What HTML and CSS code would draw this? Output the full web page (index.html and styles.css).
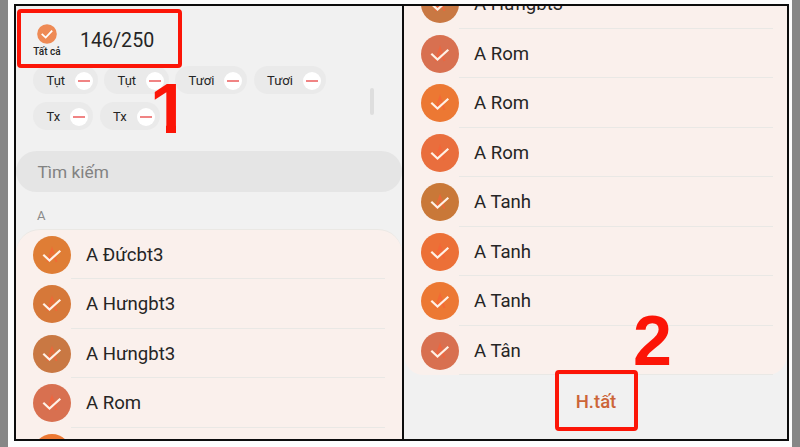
FILE: index.html
```html
<!DOCTYPE html>
<html lang="vi">
<head>
	<meta charset="UTF-8">
	<title>Danh bạ</title>
	<link rel="stylesheet" href="styles.css">
</head>
<body>
	<svg class="defs" width="0" height="0">
		<symbol id="check" viewBox="0 0 38 38">
			<path class="letter" d="M14.5 26 L19 13.5 L23.5 26 M16 22 H22"/>
			<path class="tick" d="M10.3 18.8 L16.5 24.6 L27.3 14.7"/>
		</symbol>
	</svg>
	<div class="page">
		<div class="frame">
			<div class="panel left">
				<div class="top">
					<div class="all">
						<svg width="20" height="20" viewBox="0 0 20 20">
							<circle cx="10" cy="10" r="9.8" fill="#ee8a55"/>
							<path d="M4.7 9.8 L8.7 13.6 L15.2 6.7" fill="none" stroke="#fff" stroke-width="1.8"/>
						</svg>
						<span>Tất cả</span>
					</div>
					<div class="count">146/250</div>
				</div>
				<div class="chips">
					<div class="chip c1">Tụt<i></i></div>
					<div class="chip c1">Tụt<i></i></div>
					<div class="chip c2">Tươi<i></i></div>
					<div class="chip c2">Tươi<i></i></div>
					<div class="chip c3">Tx<i></i></div>
					<div class="chip c3">Tx<i></i></div>
				</div>
				<div class="search">Tìm kiếm</div>
				<div class="group">A</div>
				<div class="list">
					<div class="row"><svg class="avatar orange"><use href="#check"/></svg><span>A Đứcbt3</span></div>
					<div class="row"><svg class="avatar amber"><use href="#check"/></svg><span>A Hưngbt3</span></div>
					<div class="row"><svg class="avatar brown"><use href="#check"/></svg><span>A Hưngbt3</span></div>
					<div class="row"><svg class="avatar red"><use href="#check"/></svg><span>A Rom</span></div>
					<div class="row"><svg class="avatar bright"><use href="#check"/></svg></div>
				</div>
				<div class="scroll"></div>
			</div>
			<div class="panel right">
				<div class="list">
					<div class="row"><svg class="avatar brown"><use href="#check"/></svg><span>A Hưngbt3</span></div>
					<div class="row"><svg class="avatar red"><use href="#check"/></svg><span>A Rom</span></div>
					<div class="row"><svg class="avatar bright"><use href="#check"/></svg><span>A Rom</span></div>
					<div class="row"><svg class="avatar coral"><use href="#check"/></svg><span>A Rom</span></div>
					<div class="row"><svg class="avatar ochre"><use href="#check"/></svg><span>A Tanh</span></div>
					<div class="row"><svg class="avatar vivid"><use href="#check"/></svg><span>A Tanh</span></div>
					<div class="row"><svg class="avatar bright"><use href="#check"/></svg><span>A Tanh</span></div>
					<div class="row"><svg class="avatar red"><use href="#check"/></svg><span>A Tân</span></div>
				</div>
				<div class="done">H.tất</div>
			</div>
		</div>
		<div class="mark mark1"></div>
		<div class="mark mark2"></div>
		<div class="num num1">1</div>
		<div class="num num2">2</div>
	</div>
</body>
</html>
```

FILE: styles.css
```css
*{
	box-sizing: border-box;
}
body{
	margin: 0;
	font-family: Roboto, "Liberation Sans", sans-serif;
	color: #252525;
}
.defs{
	position: absolute;
}
.page{
	position: relative;
	width: 800px;
	height: 447px;
	padding: 4px 3px 0 6px;
	border-left: 8px solid #878787;
	border-right: 8px solid #878787;
	background: #fdfdfd;
	overflow: hidden;
}
.frame{
	display: flex;
	width: 775px;
	height: 437px;
	border: 2px solid #0c0c0c;
}
.panel{
	position: relative;
	height: 433px;
	overflow: hidden;
	background: #f1f1f1;
}
.left{
	width: 388px;
	border-right: 2px solid #0c0c0c;
}
.right{
	width: 383px;
}
.top{
	display: flex;
	height: 60px;
	padding: 18px 0 0 16px;
}
.all{
	display: flex;
	flex-direction: column;
	align-items: center;
	width: 30px;
}
.all span{
	margin-top: 1px;
	font-size: 10px;
	line-height: 13px;
	font-weight: 500;
	white-space: nowrap;
}
.count{
	margin-left: 18px;
	font-size: 19.6px;
	line-height: 33px;
}
.chips{
	display: flex;
	flex-wrap: wrap;
	gap: 8px 6.5px;
	height: 85px;
	padding: 0 60px 0 17px;
	align-content: flex-start;
}
.chip{
	display: flex;
	align-items: center;
	justify-content: space-between;
	height: 28px;
	padding: 1px 5px 0 13.5px;
	border-radius: 14px;
	background: #eaeaea;
	font-size: 13px;
}
.c1{
	width: 64.5px;
}
.c2{
	width: 72px;
}
.c3{
	width: 60px;
}
.chip i{
	display: flex;
	align-items: center;
	justify-content: center;
	width: 18px;
	height: 18px;
	border-radius: 50%;
	background: #fff;
}
.chip i::before{
	content: "";
	width: 12px;
	height: 2px;
	background: #f08484;
}
.search{
	height: 41px;
	padding-left: 21.5px;
	border-radius: 21px;
	background: #e5e5e5;
	color: #828282;
	font-size: 17.3px;
	line-height: 42px;
}
.group{
	height: 37px;
	padding-left: 21px;
	color: #8a8a8a;
	font-size: 13px;
	line-height: 48px;
}
.list{
	background: #faf0ec;
}
.left .list{
	padding-left: 17px;
	border-top: 1px solid #eae8e4;
	border-radius: 24px 24px 0 0;
}
.right .list{
	display: flow-root;
	height: 369px;
	padding-left: 17px;
	border-radius: 0 0 20px 20px;
}
.right .row:first-child{
	margin-top: -26.5px;
}
.row{
	display: flex;
	align-items: center;
	width: 352px;
	height: 49.5px;
	font-size: 18.6px;
	background: linear-gradient(#e9e8e5, #e9e8e5) 38px 100% / 314px 1.3px no-repeat;
}
.row span{
	margin-left: 15px;
}
.avatar{
	width: 38px;
	height: 38px;
	border-radius: 50%;
}
.letter{
	fill: none;
	stroke: #fb5f35;
	stroke-width: 2;
	opacity: .65;
}
.tick{
	fill: none;
	stroke: #fff1e6;
	stroke-width: 2.2;
}
.orange{
	background: #df7d35;
}
.amber{
	background: #d67839;
}
.brown{
	background: #c97843;
}
.red{
	background: #d87050;
}
.bright{
	background: #ec7833;
}
.coral{
	background: #e96e3d;
}
.ochre{
	background: #c97838;
}
.vivid{
	background: #ec7037;
}
.done{
	padding-left: 1px;
	line-height: 55px;
	text-align: center;
	color: #cc6538;
	font-size: 18.5px;
	font-weight: 500;
}
.scroll{
	position: absolute;
	left: 354px;
	top: 82px;
	width: 4px;
	height: 27px;
	border-radius: 2px;
	background: #dedede;
}
/* red callouts drawn over both panels */
.mark{
	position: absolute;
	border: 4px solid #fc1507;
	border-radius: 4px;
}
.mark1{
	left: 9px;
	top: 9px;
	width: 165px;
	height: 59px;
}
.mark2{
	left: 547px;
	top: 370px;
	width: 83px;
	height: 61px;
}
.num{
	position: absolute;
	color: #fc1507;
	font: bold 70px/70px "Liberation Sans", Arial, sans-serif;
}
/* only the stem of the 1 goes down to the baseline */
.num1{
	left: 142px;
	top: 74px;
	clip-path: polygon(0 0, 100% 0, 100% 45px, 26px 45px, 26px 100%, 16px 100%, 16px 45px, 0 45px);
}
.num2{
	left: 625px;
	top: 306px;
}
```
